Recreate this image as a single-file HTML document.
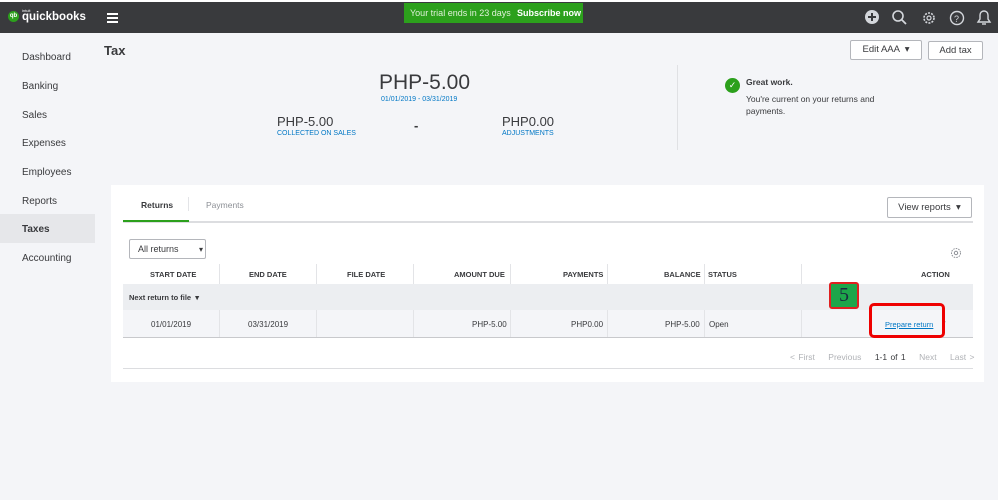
<!DOCTYPE html>
<html><head><style>
*{margin:0;padding:0;box-sizing:border-box}
body{width:998px;height:500px;overflow:hidden;background:#f4f5f8;font-family:"Liberation Sans",sans-serif;color:#393a3d;position:relative}
.a{position:absolute}
.top{left:0;top:2px;width:998px;height:31px;background:#393a3d}
.side div{position:absolute;left:22px;font-size:10px;color:#393a3d}
.btn{position:absolute;background:#fff;border:1px solid #b4b6bb;border-radius:2px;font-size:9.5px;text-align:center}
.th{position:absolute;top:270px;font-size:7.5px;font-weight:bold;color:#393a3d}
.td{position:absolute;top:320px;font-size:8px;color:#393a3d}
.vl{position:absolute;width:1px;background:#e3e4e7}
</style></head><body>
<div class="a" style="left:0;top:0;width:998px;height:2px;background:#fff"></div>
<div class="a top"></div>
<div class="a" style="left:8px;top:11px;width:11px;height:11px;border-radius:50%;background:#2ca01c;color:#fff;font-size:6px;font-weight:bold;line-height:11px;text-align:center">qb</div>
<div class="a" style="left:22px;top:8px;color:#fff;font-size:4px">intuit</div>
<div class="a" style="left:22px;top:11px;color:#fff;font-size:11.5px;font-weight:bold">quickbooks</div>
<div class="a" style="left:107px;top:13px;width:11px;height:2px;background:#fff;box-shadow:0 4px 0 #fff,0 8px 0 #fff"></div>
<div class="a" style="left:404px;top:3px;width:179px;height:20px;background:#2ca01c"></div>
<div class="a" style="left:410px;top:8px;color:#dff0d8;font-size:9px">Your trial ends in 23 days</div>
<div class="a" style="left:517px;top:8px;color:#fff;font-size:9px;font-weight:bold">Subscribe now</div>
<svg class="a" style="left:862px;top:8px" width="130" height="20" viewBox="0 0 130 20">
<circle cx="10" cy="9" r="7" fill="#d4d7dc"/><path d="M10 5v8M6 9h8" stroke="#393a3d" stroke-width="2"/>
<circle cx="36" cy="8" r="5" fill="none" stroke="#d4d7dc" stroke-width="1.6"/><path d="M40 12l4 4" stroke="#d4d7dc" stroke-width="1.8"/>
<circle cx="67" cy="10" r="5" fill="none" stroke="#d4d7dc" stroke-width="1.6" stroke-dasharray="2 1.2"/><circle cx="67" cy="10" r="2" fill="none" stroke="#d4d7dc" stroke-width="1.2"/>
<circle cx="95" cy="10" r="6.5" fill="none" stroke="#d4d7dc" stroke-width="1.4"/><text x="92" y="14" font-size="9" fill="#d4d7dc" font-family="Liberation Sans">?</text>
<path d="M116 14h12l-2-3v-4a4 4 0 0 0-8 0v4z" fill="none" stroke="#d4d7dc" stroke-width="1.4"/><path d="M120 16h4" stroke="#d4d7dc" stroke-width="1.4"/>
</svg>
<div class="side">
<div style="top:52px">Dashboard</div><div style="top:81px">Banking</div><div style="top:110px">Sales</div><div style="top:138px">Expenses</div><div style="top:167px">Employees</div><div style="top:196px">Reports</div>
<div style="left:0;top:214px;width:95px;height:29px;background:#e6e7ea"></div>
<div style="top:224px;font-weight:bold">Taxes</div><div style="top:253px">Accounting</div>
</div>
<div class="a" style="left:104px;top:43px;font-size:13px;font-weight:bold">Tax</div>
<div class="btn" style="left:850px;top:40px;width:72px;height:20px;line-height:18px">Edit AAA &nbsp;▾</div>
<div class="btn" style="left:928px;top:41px;width:55px;height:19px;line-height:17px">Add tax</div>
<div class="a" style="left:379px;top:71px;font-size:21px">PHP-5.00</div>
<div class="a" style="left:381px;top:96px;font-size:7px;color:#0077c5">01/01/2019 - 03/31/2019</div>
<div class="a" style="left:277px;top:114px;font-size:13px">PHP-5.00</div>
<div class="a" style="left:277px;top:130px;font-size:7px;color:#0077c5">COLLECTED ON SALES</div>
<div class="a" style="left:414px;top:118px;font-size:13px;font-weight:bold">-</div>
<div class="a" style="left:502px;top:114px;font-size:13px">PHP0.00</div>
<div class="a" style="left:502px;top:130px;font-size:7px;color:#0077c5">ADJUSTMENTS</div>
<div class="vl" style="left:677px;top:65px;height:85px;background:#e0e1e4"></div>
<div class="a" style="left:725px;top:78px;width:15px;height:15px;border-radius:50%;background:#2ca01c;color:#fff;font-size:9px;text-align:center;line-height:15px">✓</div>
<div class="a" style="left:746px;top:77px;font-size:8.5px;font-weight:bold">Great work.</div>
<div class="a" style="left:746px;top:93px;font-size:8.5px;line-height:12px">You're current on your returns and<br>payments.</div>
<div class="a" style="left:111px;top:185px;width:873px;height:197px;background:#fff"></div>
<div class="a" style="left:141px;top:200px;font-size:8.5px;font-weight:bold">Returns</div>
<div class="a" style="left:206px;top:200px;font-size:8.5px;color:#8d9096">Payments</div>
<div class="vl" style="left:188px;top:197px;height:14px"></div>
<div class="a" style="left:123px;top:221px;width:850px;height:2px;background:#dcdde0"></div>
<div class="a" style="left:123px;top:220px;width:66px;height:2px;background:#2ca01c"></div>
<div class="btn" style="left:887px;top:197px;width:85px;height:21px;line-height:19px">View reports &nbsp;▾</div>
<div class="btn" style="left:129px;top:239px;width:77px;height:20px;line-height:18px;text-align:left;padding-left:8px;font-size:9px">All returns <span style="margin-left:18px;font-size:8px">▾</span></div>
<svg class="a" style="left:950px;top:247px" width="12" height="12"><circle cx="6" cy="6" r="4.5" fill="none" stroke="#8d9096" stroke-width="1" stroke-dasharray="1.6 1"/><circle cx="6" cy="6" r="1.7" fill="none" stroke="#8d9096"/></svg>
<div class="a" style="left:123px;top:284px;width:850px;height:26px;background:#eceef1"></div>
<div class="a" style="left:123px;top:310px;width:850px;height:27px;background:#f4f5f8"></div>
<div class="a" style="left:123px;top:337px;width:850px;height:1px;background:#c8c9cc"></div>
<div class="vl" style="left:219px;top:264px;height:20px"></div><div class="vl" style="left:316px;top:264px;height:20px"></div><div class="vl" style="left:413px;top:264px;height:20px"></div><div class="vl" style="left:510px;top:264px;height:20px"></div><div class="vl" style="left:607px;top:264px;height:20px"></div><div class="vl" style="left:704px;top:264px;height:20px"></div><div class="vl" style="left:801px;top:264px;height:20px"></div>
<div class="vl" style="left:219px;top:310px;height:27px"></div><div class="vl" style="left:316px;top:310px;height:27px"></div><div class="vl" style="left:413px;top:310px;height:27px"></div><div class="vl" style="left:510px;top:310px;height:27px"></div><div class="vl" style="left:607px;top:310px;height:27px"></div><div class="vl" style="left:704px;top:310px;height:27px"></div><div class="vl" style="left:801px;top:310px;height:27px"></div>
<div class="th" style="left:150px">START DATE</div><div class="th" style="left:249px">END DATE</div><div class="th" style="left:347px">FILE DATE</div><div class="th" style="left:454px">AMOUNT DUE</div><div class="th" style="left:563px">PAYMENTS</div><div class="th" style="left:664px">BALANCE</div><div class="th" style="left:708px">STATUS</div><div class="th" style="left:921px">ACTION</div>
<div class="a" style="left:129px;top:293px;font-size:7.5px;font-weight:bold">Next return to file &nbsp;▾</div>
<div class="td" style="left:151px">01/01/2019</div><div class="td" style="left:248px">03/31/2019</div><div class="td" style="left:472px">PHP-5.00</div><div class="td" style="left:571px">PHP0.00</div><div class="td" style="left:665px">PHP-5.00</div><div class="td" style="left:709px">Open</div>
<div class="a" style="left:885px;top:320px;font-size:7.5px;color:#0077c5;text-decoration:underline">Prepare return</div>
<div class="a" style="left:942px;top:319px;font-size:7px">▾</div>
<div class="a" style="left:869px;top:303px;width:76px;height:35px;border:3px solid #e00;border-radius:5px"></div>
<div class="a" style="left:829px;top:282px;width:30px;height:27px;background:#1da64a;border:2px solid #e02020;border-radius:3px;font-family:'Liberation Serif',serif;font-size:20px;text-align:center;line-height:23px;color:#1a2a40">5</div>
<div class="a" style="left:790px;top:352px;font-size:8.5px;color:#b0b2b6;word-spacing:1px">&lt; First &nbsp;&nbsp; Previous &nbsp;&nbsp; <span style="color:#393a3d">1-1 of 1</span> &nbsp;&nbsp; Next &nbsp;&nbsp; Last &gt;</div>
<div class="a" style="left:123px;top:368px;width:850px;height:1px;background:#dcdde0"></div>
</body></html>
